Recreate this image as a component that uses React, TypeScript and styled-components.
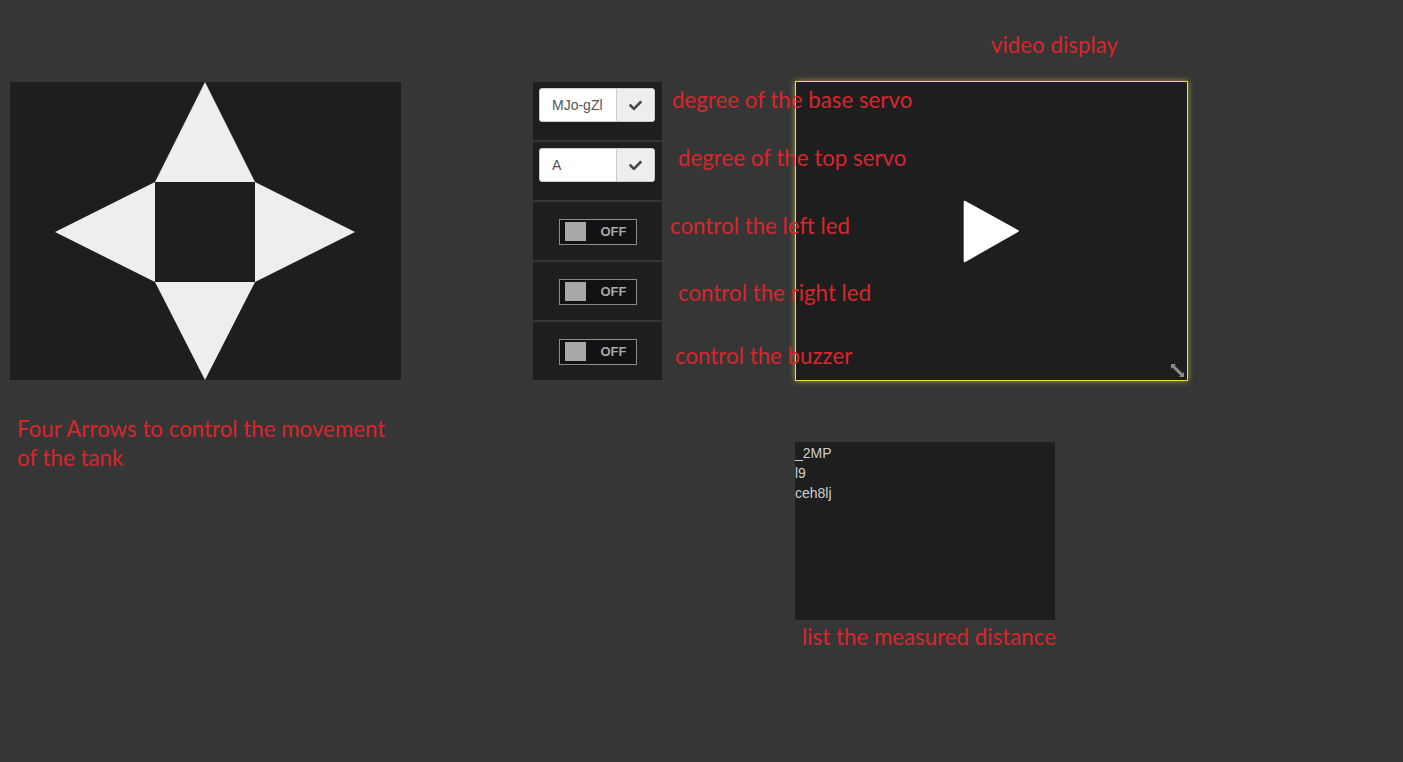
import React from "react";
import styled, { createGlobalStyle } from "styled-components";
import { FaCheck } from "react-icons/fa";

const Global = createGlobalStyle`
  html, body { margin: 0; padding: 0; background: #363636; }
  body { font-family: "Liberation Sans", Arial, sans-serif; }
  * { box-sizing: border-box; }
`;

const Page = styled.div`
  width: 1403px;
  height: 762px;
  background: #363636;
  padding-left: 10px;
  display: grid;
  grid-template-columns: 391px 132px 129px 133px 393px;
  grid-template-rows: 82px 298px auto;
  align-items: start;
`;

const annotation = `
  font-family: "Lato", "Open Sans", sans-serif;
  font-size: 22.3px;
  line-height: 24px;
  color: #d8262c;
  white-space: nowrap;
`;

const Note = styled.div<{ $col: number; $pl?: number; $mt?: number }>`
  grid-column: ${(p) => p.$col};
  padding-left: ${(p) => p.$pl ?? 0}px;
  margin-top: ${(p) => p.$mt ?? 0}px;
  ${annotation}
`;

const ArrowPad = styled.div`
  grid-column: 1;
  grid-row: 2;
  width: 391px;
  height: 298px;
  background: #1e1e1e;
  svg { display: block; }
`;

const Controls = styled.div`
  grid-column: 3;
  grid-row: 2;
  display: flex;
  flex-direction: column;
  gap: 2px;
`;

const ControlRow = styled.div<{ $center?: boolean }>`
  height: 58px;
  background: #1e1e1e;
  display: flex;
  align-items: ${(p) => (p.$center ? "center" : "flex-start")};
  justify-content: ${(p) => (p.$center ? "center" : "flex-start")};
  padding: ${(p) => (p.$center ? "1px 0 0 0" : "6px 0 0 6px")};
`;

const InputGroup = styled.div`
  width: 116px;
  height: 34px;
  display: flex;
  background: #fff;
  border-radius: 3px;
  overflow: hidden;
  border: 1px solid #ccc;
`;

const TextInput = styled.input`
  width: 76px;
  height: 100%;
  border: none;
  outline: none;
  padding: 0 12px;
  font-family: "Liberation Sans", Arial, sans-serif;
  font-size: 14px;
  color: #555;
  background: #fff;
`;

const CheckButton = styled.button`
  flex: 1;
  height: 100%;
  border: none;
  border-left: 1px solid #ccc;
  background: #eeeeee;
  color: #4a4a4a;
  display: flex;
  align-items: center;
  justify-content: center;
  padding: 0;
  svg { width: 13px; height: 13px; }
`;

const Toggle = styled.div`
  width: 78px;
  height: 26px;
  border: 1px solid #8a8a8a;
  background: #121212;
  display: flex;
  align-items: center;
  padding-left: 5px;
`;

const Knob = styled.span`
  width: 21px;
  height: 19px;
  background: #a8a8a8;
`;

const ToggleText = styled.span`
  margin-left: 15px;
  font-family: "Liberation Sans", Arial, sans-serif;
  font-weight: bold;
  font-size: 13px;
  color: #a8a8a8;
`;

const Labels = styled.div`
  grid-column: 4;
  grid-row: 2;
  position: relative;
  z-index: 2;
  display: flex;
  flex-direction: column;
`;

const Label = styled.div<{ $pl: number; $pt: number }>`
  height: 60px;
  padding-left: ${(p) => p.$pl}px;
  padding-top: ${(p) => p.$pt}px;
  ${annotation}
`;

const Video = styled.div`
  grid-column: 5;
  grid-row: 2;
  margin-top: -1px;
  width: 393px;
  height: 300px;
  background: #1e1e1e;
  border: 1px solid #f2e030;
  box-shadow: 0 0 6px rgba(255, 230, 60, 0.55);
  position: relative;
  display: flex;
  align-items: center;
  justify-content: center;
`;

const Expand = styled.div`
  position: absolute;
  right: 3px;
  bottom: 3px;
  width: 13px;
  height: 13px;
  svg { display: block; }
`;

const ListCol = styled.div`
  grid-column: 5;
  grid-row: 3;
  display: flex;
  flex-direction: column;
`;

const ListBox = styled.div`
  margin-top: 62px;
  width: 260px;
  height: 178px;
  background: #1e1e1e;
  padding-top: 1px;
  font-family: "Liberation Sans", Arial, sans-serif;
  font-size: 14px;
  line-height: 20px;
  color: #cfcfcf;
`;

const ListItem = styled.div``;

const ListCaption = styled.div`
  margin-top: 5px;
  padding-left: 7px;
  ${annotation}
`;

const ArrowCaption = styled.div`
  grid-column: 1 / span 2;
  grid-row: 3;
  margin-top: 34px;
  padding-left: 7px;
  ${annotation}
  line-height: 29px;
`;

const StarPad = () => (
  <svg width="391" height="298" viewBox="0 0 391 298">
    <g fill="#eeeeee">
      <polygon points="195,0 145,100 245,100" />
      <polygon points="45,150 145,100 145,200" />
      <polygon points="345,150 245,100 245,200" />
      <polygon points="195,298 145,200 245,200" />
    </g>
  </svg>
);

const PlayIcon = () => (
  <svg width="60" height="66" viewBox="0 0 60 66">
    <defs>
      <filter id="ps" x="-20%" y="-20%" width="140%" height="140%">
        <feDropShadow dx="0" dy="0" stdDeviation="1.2" floodColor="#000" floodOpacity="0.6" />
      </filter>
    </defs>
    <path
      d="M2.5 3.5 L56 33 L2.5 63.5 Z"
      fill="#ffffff"
      stroke="#ffffff"
      strokeWidth="1.5"
      strokeLinejoin="round"
      filter="url(#ps)"
    />
  </svg>
);

const ExpandIcon = () => (
  <svg width="13" height="13" viewBox="0 0 13 13">
    <g fill="#8c8c8c">
      <polygon points="0,0 5,0 3.6,1.4 11.6,9.4 13,8 13,13 8,13 9.4,11.6 1.4,3.6 0,5" />
    </g>
  </svg>
);

const SwitchOff = () => (
  <Toggle>
    <Knob />
    <ToggleText>OFF</ToggleText>
  </Toggle>
);

export default function App() {
  return (
    <>
      <Global />
      <Page>
        <Note $col={5} $pl={196} $mt={33}>
          video display
        </Note>

        <ArrowPad>
          <StarPad />
        </ArrowPad>

        <Controls>
          <ControlRow>
            <InputGroup>
              <TextInput readOnly value="MJo-gZl" />
              <CheckButton>
                <FaCheck />
              </CheckButton>
            </InputGroup>
          </ControlRow>
          <ControlRow>
            <InputGroup>
              <TextInput readOnly value="A" />
              <CheckButton>
                <FaCheck />
              </CheckButton>
            </InputGroup>
          </ControlRow>
          <ControlRow $center>
            <SwitchOff />
          </ControlRow>
          <ControlRow $center>
            <SwitchOff />
          </ControlRow>
          <ControlRow $center>
            <SwitchOff />
          </ControlRow>
        </Controls>

        <Labels>
          <Label $pl={10} $pt={6}>degree of the base servo</Label>
          <Label $pl={16} $pt={4}>degree of the top servo</Label>
          <Label $pl={8} $pt={12}>control the left led</Label>
          <Label $pl={16} $pt={19}>control the right led</Label>
          <Label $pl={13} $pt={22}>control the buzzer</Label>
        </Labels>

        <Video>
          <PlayIcon />
          <Expand>
            <ExpandIcon />
          </Expand>
        </Video>

        <ArrowCaption>
          Four Arrows to control the movement
          <br />
          of the tank
        </ArrowCaption>

        <ListCol>
          <ListBox>
            <ListItem>_2MP</ListItem>
            <ListItem>l9</ListItem>
            <ListItem>ceh8lj</ListItem>
          </ListBox>
          <ListCaption>list the measured distance</ListCaption>
        </ListCol>
      </Page>
    </>
  );
}
